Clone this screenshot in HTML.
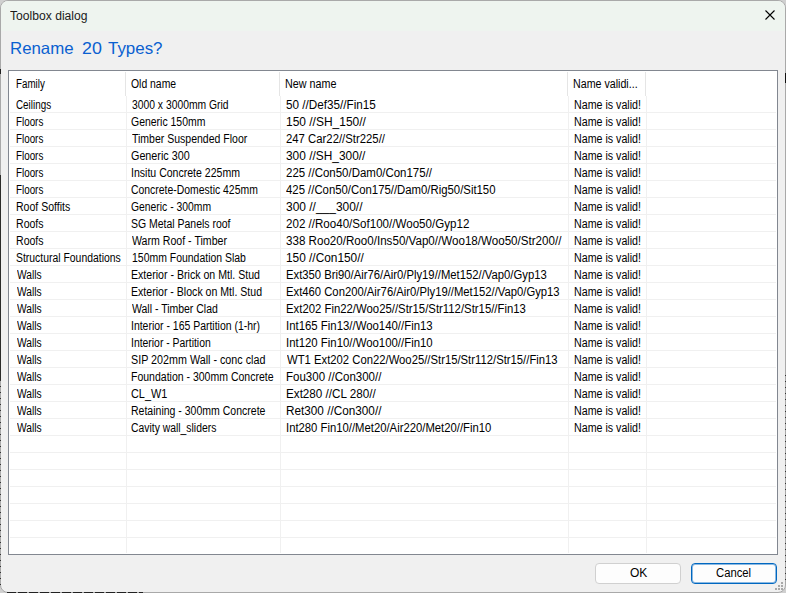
<!DOCTYPE html>
<html><head><meta charset="utf-8"><style>
html,body{margin:0;padding:0;}
body{width:786px;height:593px;overflow:hidden;position:relative;background:#d0d0d0;font-family:"Liberation Sans",sans-serif;}
.win{position:absolute;left:0;top:0;width:784px;height:591px;border:1px solid #a9a9a9;border-radius:8px;background:#f0f0f0;overflow:hidden;}
.tb{position:absolute;left:0;top:0;width:784px;height:30px;background:#eef4ef;}
.w{position:absolute;white-space:pre;}
.lv{position:absolute;left:8px;top:70px;width:768px;height:483px;border:1px solid #828790;background:#fff;}
.t{position:absolute;font-size:12px;line-height:17px;color:#000;white-space:pre;transform-origin:0 0;}
.hl{position:absolute;left:10px;width:766px;height:1px;background:#f0f0f0;}
.vl{position:absolute;top:96px;height:457px;width:1px;background:#f0f0f0;}
.hs{position:absolute;top:72px;height:24px;width:1px;background:#e5e5e5;}
.btn{position:absolute;top:563px;height:19px;width:84px;border:1px solid #d0d0d0;border-radius:4px;background:#fdfdfd;}
.bl{position:absolute;font-size:12px;line-height:17px;color:#000;white-space:pre;}
</style></head><body>
<div class="win"><div class="tb"></div></div>
<div class="w" style="left:10px;top:8px;font-size:12px;line-height:17px;color:#1a1a1a;transform:scaleX(1.01);transform-origin:0 0">Toolbox dialog</div>
<svg width="12" height="12" viewBox="0 0 12 12" style="position:absolute;left:764px;top:9px"><path d="M1.5 1.5L10.5 10.5M10.5 1.5L1.5 10.5" stroke="#000" stroke-width="1.1"/></svg>
<div class="w" style="left:10px;top:38px;font-size:16.5px;line-height:20px;color:#0a60d0;transform:scaleX(1.02);transform-origin:0 0">Rename</div>
<div class="w" style="left:81.5px;top:38px;font-size:16.5px;line-height:20px;color:#0a60d0;transform:scaleX(1.08);transform-origin:0 0">20</div>
<div class="w" style="left:107.8px;top:38px;font-size:16.5px;line-height:20px;color:#0a60d0;transform:scaleX(1.025);transform-origin:0 0">Types?</div>
<div class="lv"></div>
<div class="hl" style="top:112px"></div>
<div class="hl" style="top:129px"></div>
<div class="hl" style="top:146px"></div>
<div class="hl" style="top:163px"></div>
<div class="hl" style="top:180px"></div>
<div class="hl" style="top:197px"></div>
<div class="hl" style="top:214px"></div>
<div class="hl" style="top:231px"></div>
<div class="hl" style="top:248px"></div>
<div class="hl" style="top:265px"></div>
<div class="hl" style="top:282px"></div>
<div class="hl" style="top:299px"></div>
<div class="hl" style="top:316px"></div>
<div class="hl" style="top:333px"></div>
<div class="hl" style="top:350px"></div>
<div class="hl" style="top:367px"></div>
<div class="hl" style="top:384px"></div>
<div class="hl" style="top:401px"></div>
<div class="hl" style="top:418px"></div>
<div class="hl" style="top:435px"></div>
<div class="hl" style="top:452px"></div>
<div class="hl" style="top:469px"></div>
<div class="hl" style="top:486px"></div>
<div class="hl" style="top:503px"></div>
<div class="hl" style="top:520px"></div>
<div class="hl" style="top:537px"></div>
<div class="vl" style="left:126px"></div>
<div class="vl" style="left:280px"></div>
<div class="vl" style="left:568px"></div>
<div class="vl" style="left:646px"></div>
<div class="hs" style="left:125px"></div>
<div class="hs" style="left:279px"></div>
<div class="hs" style="left:567px"></div>
<div class="hs" style="left:645px"></div>
<div class="t" style="left:16.49px;top:97px;transform:scaleX(0.8216)">Ceilings</div>
<div class="t" style="left:131.97px;top:97px;transform:scaleX(0.8614)">3000 x 3000mm Grid</div>
<div class="t" style="left:286.01px;top:97px;transform:scaleX(0.9758)">50 //Def35//Fin15</div>
<div class="t" style="left:573.71px;top:97px;transform:scaleX(0.8887)">Name is valid!</div>
<div class="t" style="left:16.08px;top:114px;transform:scaleX(0.8188)">Floors</div>
<div class="t" style="left:131.36px;top:114px;transform:scaleX(0.8714)">Generic 150mm</div>
<div class="t" style="left:285.50px;top:114px;transform:scaleX(0.9975)">150 //SH_150//</div>
<div class="t" style="left:573.71px;top:114px;transform:scaleX(0.8887)">Name is valid!</div>
<div class="t" style="left:16.08px;top:131px;transform:scaleX(0.8188)">Floors</div>
<div class="t" style="left:131.58px;top:131px;transform:scaleX(0.8754)">Timber Suspended Floor</div>
<div class="t" style="left:286.03px;top:131px;transform:scaleX(0.9448)">247 Car22//Str225//</div>
<div class="t" style="left:573.71px;top:131px;transform:scaleX(0.8887)">Name is valid!</div>
<div class="t" style="left:16.08px;top:148px;transform:scaleX(0.8188)">Floors</div>
<div class="t" style="left:131.35px;top:148px;transform:scaleX(0.8977)">Generic 300</div>
<div class="t" style="left:286.00px;top:148px;transform:scaleX(0.9912)">300 //SH_300//</div>
<div class="t" style="left:573.71px;top:148px;transform:scaleX(0.8887)">Name is valid!</div>
<div class="t" style="left:16.08px;top:165px;transform:scaleX(0.8188)">Floors</div>
<div class="t" style="left:130.92px;top:165px;transform:scaleX(0.8785)">Insitu Concrete 225mm</div>
<div class="t" style="left:286.02px;top:165px;transform:scaleX(0.9557)">225 //Con50/Dam0/Con175//</div>
<div class="t" style="left:573.71px;top:165px;transform:scaleX(0.8887)">Name is valid!</div>
<div class="t" style="left:16.08px;top:182px;transform:scaleX(0.8188)">Floors</div>
<div class="t" style="left:131.37px;top:182px;transform:scaleX(0.8684)">Concrete-Domestic 425mm</div>
<div class="t" style="left:286.26px;top:182px;transform:scaleX(0.9459)">425 //Con50/Con175//Dam0/Rig50/Sit150</div>
<div class="t" style="left:573.71px;top:182px;transform:scaleX(0.8887)">Name is valid!</div>
<div class="t" style="left:16.02px;top:199px;transform:scaleX(0.8777)">Roof Soffits</div>
<div class="t" style="left:131.37px;top:199px;transform:scaleX(0.8634)">Generic - 300mm</div>
<div class="t" style="left:286.00px;top:199px;transform:scaleX(0.9967)">300 //___300//</div>
<div class="t" style="left:573.71px;top:199px;transform:scaleX(0.8887)">Name is valid!</div>
<div class="t" style="left:16.02px;top:216px;transform:scaleX(0.8800)">Roofs</div>
<div class="t" style="left:131.36px;top:216px;transform:scaleX(0.8722)">SG Metal Panels roof</div>
<div class="t" style="left:286.02px;top:216px;transform:scaleX(0.9653)">202 //Roo40/Sof100//Woo50/Gyp12</div>
<div class="t" style="left:573.71px;top:216px;transform:scaleX(0.8887)">Name is valid!</div>
<div class="t" style="left:16.02px;top:233px;transform:scaleX(0.8800)">Roofs</div>
<div class="t" style="left:131.80px;top:233px;transform:scaleX(0.8828)">Warm Roof - Timber</div>
<div class="t" style="left:286.02px;top:233px;transform:scaleX(0.9668)">338 Roo20/Roo0/Ins50/Vap0//Woo18/Woo50/Str200//</div>
<div class="t" style="left:573.71px;top:233px;transform:scaleX(0.8887)">Name is valid!</div>
<div class="t" style="left:16.47px;top:250px;transform:scaleX(0.8676)">Structural Foundations</div>
<div class="t" style="left:131.53px;top:250px;transform:scaleX(0.8712)">150mm Foundation Slab</div>
<div class="t" style="left:285.51px;top:250px;transform:scaleX(0.9878)">150 //Con150//</div>
<div class="t" style="left:573.71px;top:250px;transform:scaleX(0.8887)">Name is valid!</div>
<div class="t" style="left:16.90px;top:267px;transform:scaleX(0.8526)">Walls</div>
<div class="t" style="left:130.92px;top:267px;transform:scaleX(0.8832)">Exterior - Brick on Mtl. Stud</div>
<div class="t" style="left:285.56px;top:267px;transform:scaleX(0.9403)">Ext350 Bri90/Air76/Air0/Ply19//Met152//Vap0/Gyp13</div>
<div class="t" style="left:573.71px;top:267px;transform:scaleX(0.8887)">Name is valid!</div>
<div class="t" style="left:16.90px;top:284px;transform:scaleX(0.8526)">Walls</div>
<div class="t" style="left:130.92px;top:284px;transform:scaleX(0.8810)">Exterior - Block on Mtl. Stud</div>
<div class="t" style="left:285.56px;top:284px;transform:scaleX(0.9394)">Ext460 Con200/Air76/Air0/Ply19//Met152//Vap0/Gyp13</div>
<div class="t" style="left:573.71px;top:284px;transform:scaleX(0.8887)">Name is valid!</div>
<div class="t" style="left:16.90px;top:301px;transform:scaleX(0.8526)">Walls</div>
<div class="t" style="left:131.80px;top:301px;transform:scaleX(0.8738)">Wall - Timber Clad</div>
<div class="t" style="left:285.55px;top:301px;transform:scaleX(0.9455)">Ext202 Fin22/Woo25//Str15/Str112/Str15//Fin13</div>
<div class="t" style="left:573.71px;top:301px;transform:scaleX(0.8887)">Name is valid!</div>
<div class="t" style="left:16.90px;top:318px;transform:scaleX(0.8526)">Walls</div>
<div class="t" style="left:130.93px;top:318px;transform:scaleX(0.8711)">Interior - 165 Partition (1-hr)</div>
<div class="t" style="left:285.55px;top:318px;transform:scaleX(0.9490)">Int165 Fin13//Woo140//Fin13</div>
<div class="t" style="left:573.71px;top:318px;transform:scaleX(0.8887)">Name is valid!</div>
<div class="t" style="left:16.90px;top:335px;transform:scaleX(0.8526)">Walls</div>
<div class="t" style="left:130.93px;top:335px;transform:scaleX(0.8665)">Interior - Partition</div>
<div class="t" style="left:285.55px;top:335px;transform:scaleX(0.9490)">Int120 Fin10//Woo100//Fin10</div>
<div class="t" style="left:573.71px;top:335px;transform:scaleX(0.8887)">Name is valid!</div>
<div class="t" style="left:16.90px;top:352px;transform:scaleX(0.8526)">Walls</div>
<div class="t" style="left:131.35px;top:352px;transform:scaleX(0.8955)">SIP 202mm Wall - conc clad</div>
<div class="t" style="left:286.50px;top:352px;transform:scaleX(0.9406)">WT1 Ext202 Con22/Woo25//Str15/Str112/Str15//Fin13</div>
<div class="t" style="left:573.71px;top:352px;transform:scaleX(0.8887)">Name is valid!</div>
<div class="t" style="left:16.90px;top:369px;transform:scaleX(0.8526)">Walls</div>
<div class="t" style="left:130.92px;top:369px;transform:scaleX(0.8757)">Foundation - 300mm Concrete</div>
<div class="t" style="left:285.54px;top:369px;transform:scaleX(0.9598)">Fou300 //Con300//</div>
<div class="t" style="left:573.71px;top:369px;transform:scaleX(0.8887)">Name is valid!</div>
<div class="t" style="left:16.90px;top:386px;transform:scaleX(0.8526)">Walls</div>
<div class="t" style="left:131.35px;top:386px;transform:scaleX(0.9077)">CL_W1</div>
<div class="t" style="left:285.53px;top:386px;transform:scaleX(0.9732)">Ext280 //CL 280//</div>
<div class="t" style="left:573.71px;top:386px;transform:scaleX(0.8887)">Name is valid!</div>
<div class="t" style="left:16.90px;top:403px;transform:scaleX(0.8526)">Walls</div>
<div class="t" style="left:130.92px;top:403px;transform:scaleX(0.8763)">Retaining - 300mm Concrete</div>
<div class="t" style="left:285.52px;top:403px;transform:scaleX(0.9797)">Ret300 //Con300//</div>
<div class="t" style="left:573.71px;top:403px;transform:scaleX(0.8887)">Name is valid!</div>
<div class="t" style="left:16.90px;top:420px;transform:scaleX(0.8526)">Walls</div>
<div class="t" style="left:131.37px;top:420px;transform:scaleX(0.8645)">Cavity wall_sliders</div>
<div class="t" style="left:285.56px;top:420px;transform:scaleX(0.9412)">Int280 Fin10//Met20/Air220/Met20//Fin10</div>
<div class="t" style="left:573.71px;top:420px;transform:scaleX(0.8887)">Name is valid!</div>
<div class="t" style="left:15.79px;top:76px;transform:scaleX(0.8146)">Family</div>
<div class="t" style="left:131.37px;top:76px;transform:scaleX(0.8667)">Old name</div>
<div class="t" style="left:285.40px;top:76px;transform:scaleX(0.8969)">New name</div>
<div class="t" style="left:573.41px;top:76px;transform:scaleX(0.8890)">Name validi...</div>
<div class="btn" style="left:595px"></div>
<div class="btn" style="left:691px;border:1px solid #0067c0;box-shadow:inset 0 0 0 1px rgba(0,103,192,0.45)"></div>
<div class="bl" style="left:630px;top:565px">OK</div>
<div class="bl" style="left:716px;top:565px;transform:scaleX(0.94);transform-origin:0 0">Cancel</div>
<div style="position:absolute;left:781px;top:582px;width:2px;height:2px;background:#a8a8a8"></div><div style="position:absolute;left:778px;top:585px;width:2px;height:2px;background:#a8a8a8"></div><div style="position:absolute;left:781px;top:585px;width:2px;height:2px;background:#a8a8a8"></div><div style="position:absolute;left:775px;top:588px;width:2px;height:2px;background:#a8a8a8"></div><div style="position:absolute;left:778px;top:588px;width:2px;height:2px;background:#a8a8a8"></div><div style="position:absolute;left:781px;top:588px;width:2px;height:2px;background:#a8a8a8"></div>
<div style="position:absolute;left:0;top:175px;width:1px;height:205px;background:#2c2c2a"></div>
<div style="position:absolute;left:0;top:69px;width:1px;height:5px;background:#222"></div>
<div style="position:absolute;left:0;top:380px;width:1px;height:205px;background:repeating-linear-gradient(#333 0 1px,transparent 1px 6px)"></div>
<div style="position:absolute;left:785px;top:73px;width:1px;height:10px;background:#111"></div>
<div style="position:absolute;left:785px;top:375px;width:1px;height:210px;background:repeating-linear-gradient(#333 0 1px,transparent 1px 6px)"></div>
<div style="position:absolute;left:7px;top:592px;width:136px;height:1px;background:repeating-linear-gradient(90deg,#222 0 9px,transparent 9px 11px)"></div>
</body></html>
